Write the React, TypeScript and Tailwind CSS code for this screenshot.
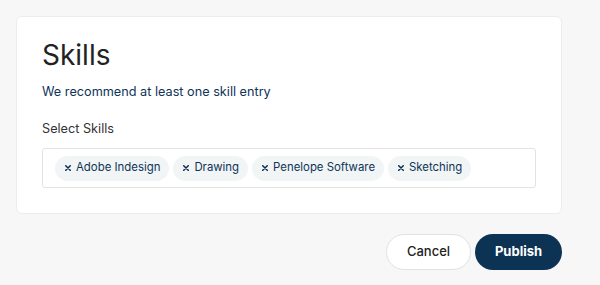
import React from "react";

const skills = ["Adobe Indesign", "Drawing", "Penelope Software", "Sketching"];

function XIcon() {
  return (
    <svg width="6" height="6" viewBox="0 0 8 8" className="shrink-0">
      <path d="M1 1L7 7M7 1L1 7" stroke="#0f2f4f" strokeWidth="2" strokeLinecap="round" />
    </svg>
  );
}

export default function App() {
  return (
    <div
      className="w-[600px] h-[285px] bg-[#f7f7f7] pt-4 pl-4 pr-[38px] flex flex-col"
      style={{ fontFamily: "Inter, 'Noto Sans', sans-serif" }}
    >
      <div className="bg-white border border-[#ececec] rounded-md pl-[25px] pr-[25px] pt-[21px] pb-[25px]">
        <h1 className="text-[28px] leading-[34px] text-[#222] font-normal">Skills</h1>
        <p className="mt-[11px] text-[12.7px] leading-[18px] text-[#0f3457]">We recommend at least one skill entry</p>
        <div className="mt-[19px] text-[12.7px] leading-[18px] text-[#333]">Select Skills</div>
        <div className="mt-[10px] h-[40px] border border-[#e3e3e3] rounded-[3px] flex items-center gap-1 pl-3">
          {skills.map((s) => (
            <span
              key={s}
              className="h-[25px] rounded-full bg-[#f1f5f6] flex items-center gap-[5px] pl-[10px] pr-[9px] text-[11.4px] text-[#0f3457]"
            >
              <XIcon />
              {s}
            </span>
          ))}
        </div>
      </div>
      <div className="mt-5 flex justify-end gap-1">
        <button className="h-9 w-[85px] rounded-full border border-[#e2e2e2] bg-white text-[13px] font-medium text-[#222]">
          Cancel
        </button>
        <button className="h-9 w-[87px] rounded-full bg-[#0d3354] text-[13px] font-bold text-white">
          Publish
        </button>
      </div>
    </div>
  );
}
